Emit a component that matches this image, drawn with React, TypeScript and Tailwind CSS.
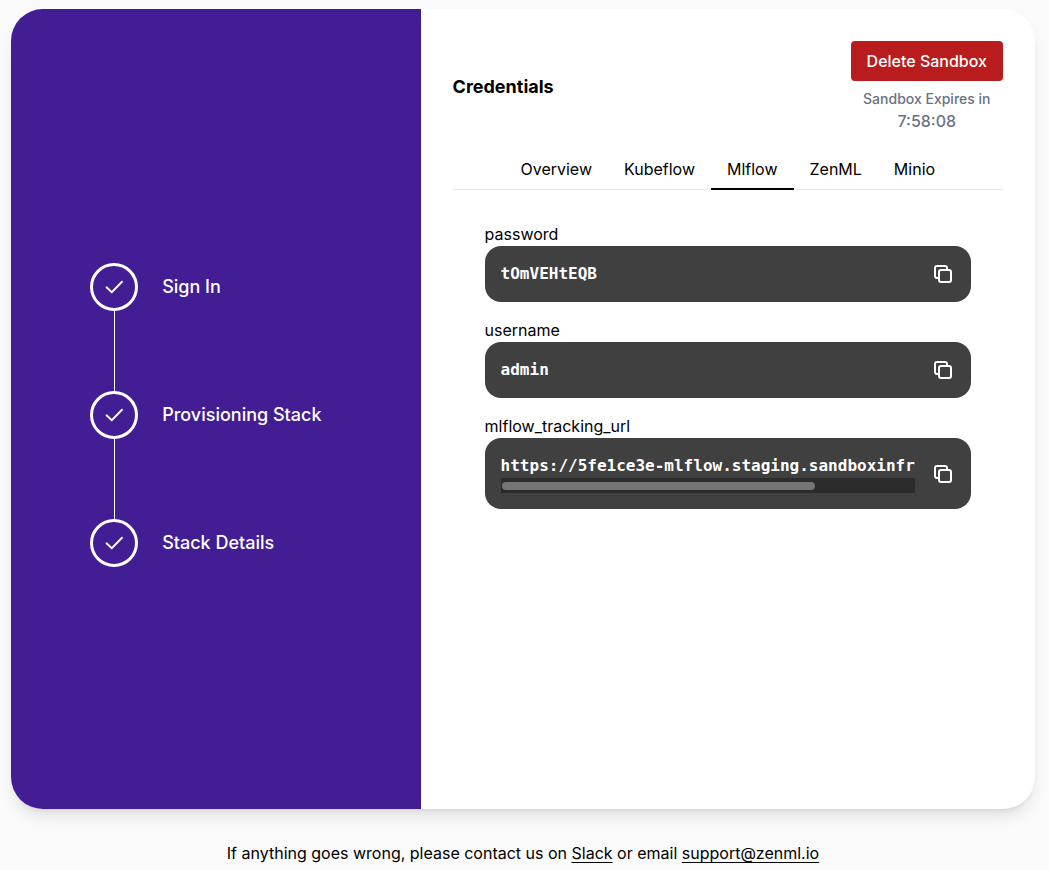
import { useState } from "react";

const steps = ["Sign In", "Provisioning Stack", "Stack Details"];
const tabs = ["Overview", "Kubeflow", "Mlflow", "ZenML", "Minio"];
const credentials = [
  { name: "password", value: "tOmVEHtEQB" },
  { name: "username", value: "admin" },
  {
    name: "mlflow_tracking_url",
    value: "https://5fe1ce3e-mlflow.staging.sandboxinfr",
    scrolls: true,
  },
];

function CheckIcon() {
  return (
    <svg className="size-6" viewBox="0 0 24 24" fill="none" stroke="currentColor" strokeWidth="1.8" strokeLinecap="round" strokeLinejoin="round" aria-hidden="true">
      <path d="M4.5 12.25 9.75 17.25 20 6.75" />
    </svg>
  );
}

function CopyIcon() {
  return (
    <svg className="size-6" viewBox="0 0 24 24" fill="none" stroke="currentColor" strokeWidth="2" strokeLinecap="round" strokeLinejoin="round" aria-hidden="true">
      <rect x="8" y="8" width="12" height="12" rx="2" />
      <path d="M16 8V6a2 2 0 0 0-2-2H6a2 2 0 0 0-2 2v8a2 2 0 0 0 2 2h2" />
    </svg>
  );
}

function Steps() {
  return (
    <aside className="flex w-2/5 items-center justify-center bg-[#431d93] pt-3 text-white">
      <ol>
        {steps.map((step, i) => (
          <li key={step}>
            {i > 0 && <div className="ml-6 h-20 w-px bg-white" />}
            <div className="flex items-center">
              <span className="flex size-12 items-center justify-center rounded-full border-3 border-white">
                <CheckIcon />
              </span>
              <span className="mr-5 ml-6 text-lg font-medium">{step}</span>
            </div>
          </li>
        ))}
      </ol>
    </aside>
  );
}

function Credential({ name, value, scrolls }: { name: string; value: string; scrolls?: boolean }) {
  return (
    <div>
      <dt>{name}</dt>
      <dd className="flex items-center gap-4 rounded-2xl bg-[#404040] p-4 text-white">
        <div className="min-w-0 flex-1">
          <code className="block overflow-hidden whitespace-nowrap font-['DejaVu_Sans_Mono',monospace] text-base font-bold">
            {value}
          </code>
          {scrolls && (
            <div className="flex h-[15px] items-center bg-[#2c2c2c] px-px">
              <div className="h-2 w-[76%] rounded-full bg-[#757575]" />
            </div>
          )}
        </div>
        <button type="button" aria-label={name}>
          <CopyIcon />
        </button>
      </dd>
    </div>
  );
}

export default function App() {
  const [active, setActive] = useState("Mlflow");
  return (
    <div className="min-h-screen bg-[#fafafa] pt-[9px] pr-[14px] pl-[11px] font-['Inter',sans-serif] text-base text-black">
      <main className="flex min-h-[800px] overflow-hidden rounded-[32px] bg-white shadow-lg">
        <Steps />
        <section className="w-3/5 p-8">
          <header className="flex items-center justify-between">
            <h1 className="text-lg font-bold">Credentials</h1>
            <div className="text-center font-medium text-gray-500">
              <button type="button" className="mb-2 block rounded-sm bg-[#b91c1c] px-4 py-2 text-white">
                Delete Sandbox
              </button>
              <p className="text-sm">Sandbox Expires in</p>
              <p>7:58:08</p>
            </div>
          </header>
          <div role="tablist" className="mt-4 flex justify-center border-b border-gray-200">
            {tabs.map((tab) => (
              <button
                key={tab}
                type="button"
                role="tab"
                aria-selected={tab === active}
                onClick={() => setActive(tab)}
                className={
                  tab === active
                    ? "-mb-px border-b-2 border-black px-4 pt-2 pb-[7px]"
                    : "-mb-px border-b-2 border-transparent px-4 pt-2 pb-[7px]"
                }
              >
                {tab}
              </button>
            ))}
          </div>
          <dl className="flex flex-col gap-4 p-8">
            {credentials.map((c) => (
              <Credential key={c.name} {...c} />
            ))}
          </dl>
        </section>
      </main>
      <footer className="pt-8 text-center">
        If anything goes wrong, please contact us on{" "}
        <a href="#slack" className="underline underline-offset-3">Slack</a> or email{" "}
        <a href="mailto:support@zenml.io" className="underline underline-offset-3">support@zenml.io</a>
      </footer>
    </div>
  );
}
